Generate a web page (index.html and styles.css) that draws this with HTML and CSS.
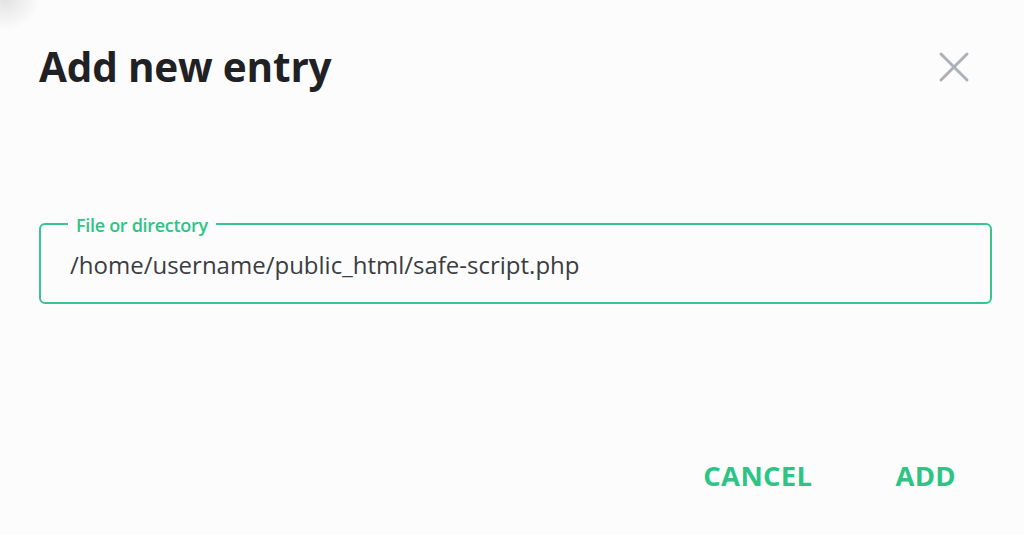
FILE: index.html
```html
<!DOCTYPE html>
<html lang="en">
<head>
<meta charset="utf-8">
<title>Add new entry</title>
<link rel="stylesheet" href="styles.css">
</head>
<body>
<div class="corner-shade"></div>
<main class="dialog">
  <header class="dialog-header">
    <h1 class="dialog-title">Add new entry</h1>
    <button class="close-btn" aria-label="Close">
      <svg width="32" height="32" viewBox="0 0 32 32"><path d="M3 3 L29 29 M29 3 L3 29" stroke="#adb1b6" stroke-width="3" stroke-linecap="round" fill="none"/></svg>
    </button>
  </header>
  <fieldset class="field">
    <legend class="field-label">File or directory</legend>
    <div class="field-value">/home/username/public_html/safe-script.php</div>
  </fieldset>
  <footer class="actions">
    <button class="text-btn">CANCEL</button>
    <button class="text-btn">ADD</button>
  </footer>
</main>
</body>
</html>
```

FILE: styles.css
```css
* { box-sizing: border-box; }
html, body { margin: 0; height: 100%; }
body {
  background: #fcfcfc;
  font-family: "Open Sans", "Noto Sans", sans-serif;
  color: #222;
  overflow: hidden;
  position: relative;
}
.corner-shade {
  position: absolute;
  left: -30px;
  top: -30px;
  width: 70px;
  height: 60px;
  background: radial-gradient(closest-side, rgba(180,180,180,0.35), rgba(180,180,180,0));
}
.dialog {
  padding: 37px 32px 0 39px;
}
.dialog-header {
  display: flex;
  justify-content: space-between;
  align-items: center;
}
.dialog-title {
  margin: 0;
  font-size: 40.5px;
  font-weight: 700;
  line-height: 60px;
  color: #1f2124;
  letter-spacing: -0.2px;
}
.close-btn {
  background: none;
  border: 0;
  padding: 0;
  width: 32px;
  height: 32px;
  margin-right: 22px;
  display: flex;
}
.field {
  margin: 115px 0 0 0;
  border: 2px solid #37c48f;
  border-radius: 6px;
  padding: 9px 0 17px 29px;
  min-width: 0;
}
.field-label {
  margin-left: -2px;
  padding: 2px 8px 0;
  color: #2ec486;
  font-size: 18px;
  font-weight: 600;
  line-height: 22px;
  letter-spacing: -0.3px;
}
.field-value {
  font-size: 24px;
  line-height: 40px;
  color: #3a3d42;
}
.actions {
  display: flex;
  justify-content: flex-end;
  gap: 83px;
  margin-top: 153px;
  padding-right: 36px;
}
.text-btn {
  background: none;
  border: 0;
  padding: 0;
  font-family: inherit;
  font-size: 27.5px;
  font-weight: 700;
  color: #2ec486;
  letter-spacing: 0.3px;
  cursor: pointer;
}
```
